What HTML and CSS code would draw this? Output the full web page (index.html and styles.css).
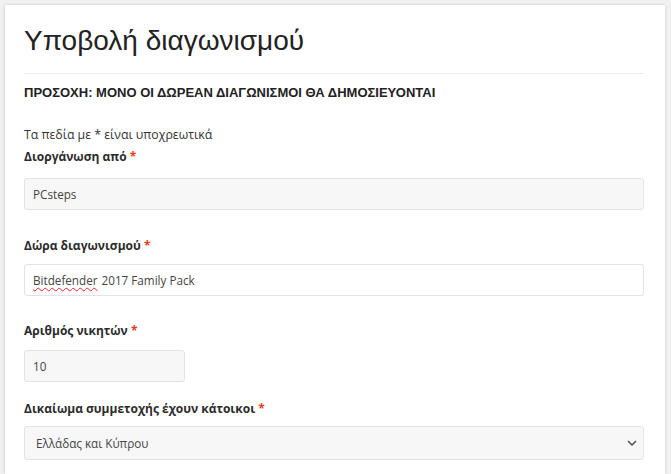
FILE: index.html
```html
<!DOCTYPE html>
<html lang="el">
<head>
<meta charset="utf-8">
<title>Υποβολή διαγωνισμού</title>
<link rel="stylesheet" href="styles.css">
</head>
<body>
<div class="card">
  <h1 class="title">Υποβολή διαγωνισμού</h1>
  <hr class="divider">
  <p class="notice">ΠΡΟΣΟΧΗ: ΜΟΝΟ ΟΙ ΔΩΡΕΑΝ ΔΙΑΓΩΝΙΣΜΟΙ ΘΑ ΔΗΜΟΣΙΕΥΟΝΤΑΙ</p>
  <p class="required-note">Τα πεδία με * είναι υποχρεωτικά</p>
  <div class="field field-1">
    <label class="label">Διοργάνωση από <span class="req">*</span></label>
    <input class="control" type="text" value="PCsteps" readonly>
  </div>
  <div class="field field-2">
    <label class="label">Δώρα διαγωνισμού <span class="req">*</span></label>
    <div class="control control-white"><span class="misspelled">Bitdefender</span> 2017 Family Pack</div>
  </div>
  <div class="field field-3">
    <label class="label">Αριθμός νικητών <span class="req">*</span></label>
    <input class="control control-short" type="text" value="10" readonly>
  </div>
  <div class="field field-4">
    <label class="label">Δικαίωμα συμμετοχής έχουν κάτοικοι <span class="req">*</span></label>
    <div class="control control-select">
      <span>Ελλάδας και Κύπρου</span>
      <svg class="chevron" width="10" height="6" viewBox="0 0 10 6"><path d="M1 1 L5 5 L9 1" fill="none" stroke="#555" stroke-width="1.6"/></svg>
    </div>
  </div>
</div>
</body>
</html>
```
FILE: styles.css
```css
html, body {
  margin: 0;
  padding: 0;
  background: #f1f1f1;
  height: 100%;
  overflow: hidden;
}
.card {
  box-sizing: border-box;
  margin: 5px 6px 0 5px;
  background: #fff;
  box-shadow: 0 0 3px rgba(0,0,0,0.18);
  padding: 19px 21px 8px 19px;
  min-height: calc(100vh - 5px);
  font-family: "Open Sans", sans-serif;
  color: #333;
}
.title {
  margin: 0;
  font-family: "Liberation Sans", Arial, sans-serif;
  font-weight: 400;
  font-size: 28px;
  line-height: 34px;
  color: #222;
}
.divider {
  border: 0;
  border-top: 1px solid #ebebeb;
  margin: 15px 0 10px;
}
.notice {
  margin: 0;
  font-family: "Liberation Sans", Arial, sans-serif;
  font-weight: 700;
  font-size: 13px;
  line-height: 18px;
  color: #222;
}
.required-note {
  margin: 24px 0 3px;
  font-size: 12.3px;
  line-height: 18px;
  color: #333;
}
.field {
  display: flex;
  flex-direction: column;
}
.field-1 { gap: 11px; }
.field-2 { gap: 8px; margin-top: 26px; }
.field-3 { gap: 9px; margin-top: 25px; }
.field-4 { gap: 7px; margin-top: 17px; }
.label {
  font-weight: 700;
  font-size: 12px;
  line-height: 20px;
  color: #2b2b2b;
}
.req {
  color: #e2401c;
}
.control {
  box-sizing: border-box;
  height: 32px;
  width: 100%;
  border: 1px solid #e3e3e3;
  border-radius: 3px;
  background: #f7f7f7;
  padding: 0 8px;
  font-family: "Open Sans", sans-serif;
  font-size: 11.7px;
  color: #444;
  display: flex;
  align-items: center;
  outline: none;
}
.control-white {
  background: #fff;
}
.control-short {
  width: 161px;
}
.control-select {
  height: 34px;
  justify-content: space-between;
  padding: 0 6px 0 11px;
}
.misspelled {
  text-decoration: underline wavy #e23;
  text-decoration-thickness: 1px;
  text-underline-offset: 2px;
  margin-right: 4px;
}
.chevron {
  display: block;
}
```
